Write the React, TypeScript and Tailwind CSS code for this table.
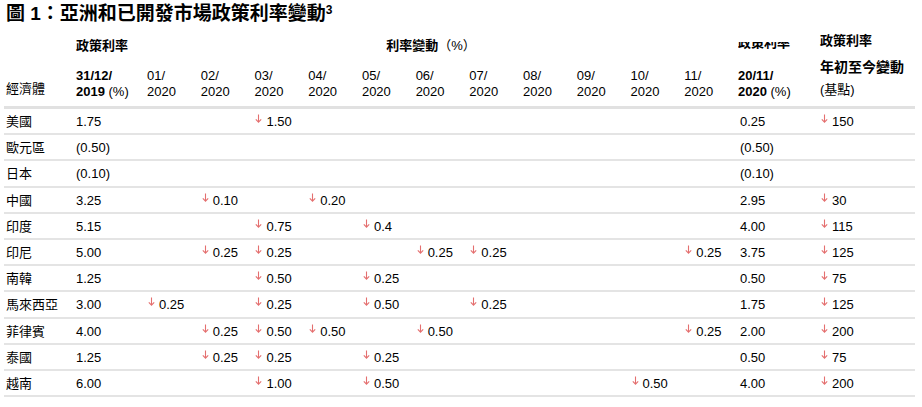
type Row = {
  name: string;
  base: string;
  moves: Record<number, string>;
  end: string;
  ytd?: string;
};

const MONTHS = ["01", "02", "03", "04", "05", "06", "07", "08", "09", "10", "11"];

const ROWS: Row[] = [
  { name: "美國", base: "1.75", moves: { 2: "1.50" }, end: "0.25", ytd: "150" },
  { name: "歐元區", base: "(0.50)", moves: {}, end: "(0.50)" },
  { name: "日本", base: "(0.10)", moves: {}, end: "(0.10)" },
  { name: "中國", base: "3.25", moves: { 1: "0.10", 3: "0.20" }, end: "2.95", ytd: "30" },
  { name: "印度", base: "5.15", moves: { 2: "0.75", 4: "0.4" }, end: "4.00", ytd: "115" },
  {
    name: "印尼",
    base: "5.00",
    moves: { 1: "0.25", 2: "0.25", 5: "0.25", 6: "0.25", 10: "0.25" },
    end: "3.75",
    ytd: "125",
  },
  { name: "南韓", base: "1.25", moves: { 2: "0.50", 4: "0.25" }, end: "0.50", ytd: "75" },
  {
    name: "馬來西亞",
    base: "3.00",
    moves: { 0: "0.25", 2: "0.25", 4: "0.50", 6: "0.25" },
    end: "1.75",
    ytd: "125",
  },
  {
    name: "菲律賓",
    base: "4.00",
    moves: { 1: "0.25", 2: "0.50", 3: "0.50", 5: "0.50", 10: "0.25" },
    end: "2.00",
    ytd: "200",
  },
  { name: "泰國", base: "1.25", moves: { 1: "0.25", 2: "0.25", 4: "0.25" }, end: "0.50", ytd: "75" },
  { name: "越南", base: "6.00", moves: { 2: "1.00", 4: "0.50", 9: "0.50" }, end: "4.00", ytd: "200" },
];

const GRID = "grid grid-cols-[70px_71px_repeat(11,minmax(0,1fr))_82px_95px]";

function DownArrow() {
  return (
    <svg width="7" height="9" viewBox="0 0 7 9" className="mb-[7px] ml-[1px] mr-[4px] shrink-0" fill="none">
      <path d="M3.5 0.5V8.2M0.8 5.4L3.5 8.2L6.2 5.4" stroke="#e46f6f" strokeWidth="1.1" />
    </svg>
  );
}

function Move({ value }: { value?: string }) {
  if (!value) return <div />;
  return (
    <div className="flex items-center">
      <DownArrow />
      <span>{value}</span>
    </div>
  );
}

export default function App() {
  return (
    <div className="h-[407px] w-[922px] overflow-hidden bg-white text-[13px] text-black [font-family:'Liberation_Sans','Noto_Sans_CJK_TC',sans-serif]">
      <div className="h-[33px] pl-[6px] pt-[3px] text-[19px] font-bold leading-[22px]">
        圖 1：亞洲和已開發市場政策利率變動<sup className="text-[12px]">3</sup>
      </div>

      <div className="ml-[4px] w-[911px]">
        <div className="border-b-[3px] border-[#e1e1e1] pl-[2px]">
          <div className={`${GRID} h-[26px] items-center font-bold leading-[16px]`}>
            <div />
            <div>政策利率</div>
            <div className="col-span-11 pr-[23px] text-center">
              利率變動<span className="font-normal">（%）</span>
            </div>
            <div className="h-[8px] overflow-hidden">
              <div className="-mt-[7px] leading-[16px]">政策利率</div>
            </div>
            <div className="mb-[10px]">政策利率</div>
          </div>
          <div className={`${GRID} h-[47px] items-end pb-[6px] leading-[16px]`}>
            <div className="mb-[3px]">經濟體</div>
            <div>
              <div className="font-bold">31/12/</div>
              <div>
                <span className="font-bold">2019</span> (%)
              </div>
            </div>
            {MONTHS.map((m) => (
              <div key={m}>
                <div>{m}/</div>
                <div>2020</div>
              </div>
            ))}
            <div>
              <div className="font-bold">20/11/</div>
              <div>
                <span className="font-bold">2020</span> (%)
              </div>
            </div>
            <div className="pb-[2px]">
              <div className="mb-[7px] text-[14px] font-bold">年初至今變動</div>
              <div>(基點)</div>
            </div>
          </div>
        </div>

        {ROWS.map((row) => (
          <div key={row.name} className="border-b-2 border-[#e4e4e4] pl-[2px]">
            <div className={`${GRID} h-[24.2px] items-center pt-[2px] leading-[16px]`}>
              <div>{row.name}</div>
              <div>{row.base}</div>
              {MONTHS.map((m, i) => (
                <Move key={m} value={row.moves[i]} />
              ))}
              <div className="pl-[2px]">{row.end}</div>
              <Move value={row.ytd} />
            </div>
          </div>
        ))}
      </div>
    </div>
  );
}
